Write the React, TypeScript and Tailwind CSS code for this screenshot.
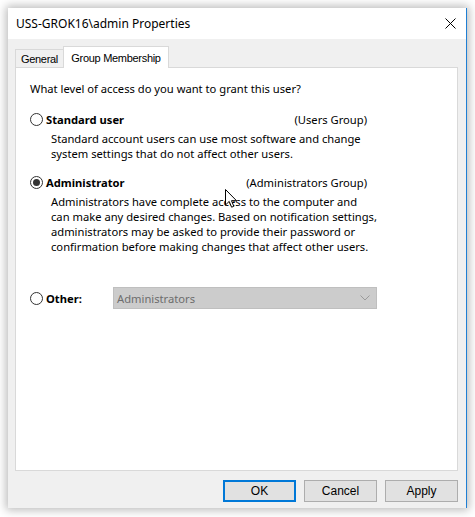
import React from "react";

const ui = "font-['Noto_Sans',sans-serif]";

function Radio({ checked }: { checked?: boolean }) {
  return (
    <span className="w-[13px] h-[13px] rounded-full border border-[#333333] bg-white flex items-center justify-center shrink-0">
      {checked && <span className="w-[7px] h-[7px] rounded-full bg-[#333333]" />}
    </span>
  );
}

function Btn({ label, primary }: { label: string; primary?: boolean }) {
  return (
    <button
      className={
        primary
          ? "w-[73px] h-[22px] bg-[#e1e1e1] border-2 border-[#0078d7] flex items-center justify-center font-['Liberation_Sans',sans-serif] text-[12px] text-black"
          : "w-[73px] h-[22px] bg-[#e1e1e1] border border-[#adadad] flex items-center justify-center font-['Liberation_Sans',sans-serif] text-[12px] text-black"
      }
    >
      {label}
    </button>
  );
}

export default function App() {
  return (
    <div className={`relative w-[475px] h-[517px] bg-white p-2 ${ui} text-[11.2px] text-black`}>
      <div className="w-[459px] h-[500px] flex flex-col border-r border-[#1f7fd4] shadow-[0_0_9px_2px_rgba(0,0,0,0.28)]">
        {/* title bar */}
        <div className="h-[31px] bg-white flex items-center justify-between pl-2 pr-[10px]">
          <span className="text-[12px]">USS-GROK16\admin Properties</span>
          <svg width="11" height="11" viewBox="0 0 11 11">
            <path d="M0.5 0.5 L10.5 10.5 M10.5 0.5 L0.5 10.5" stroke="#000" strokeWidth="1" fill="none" />
          </svg>
        </div>

        {/* body */}
        <div className="flex-1 bg-[#f0f0f0] flex flex-col pl-[7px] pr-[8px] pt-[7px] pb-[6px]">
          {/* tabs */}
          <div className="flex items-end h-[21px] font-['Liberation_Sans',sans-serif] text-[11px] tracking-[-0.3px]">
            <div className="w-[49px] h-[18px] border border-b-0 border-[#d9d9d9] bg-[#f0f0f0] flex items-center justify-center pt-[1px]">
              General
            </div>
            <div className="relative z-10 -ml-px -mb-px w-[106px] h-[22px] border border-b-0 border-[#d9d9d9] bg-white flex items-start justify-center pt-[3px]">
              Group Membership
            </div>
          </div>

          {/* panel */}
          <div className="h-[404px] bg-white border border-[#d9d9d9] pl-[14px] pt-[13px] leading-[15px]">
            <div>What level of access do you want to grant this user?</div>

            <div className="mt-[16px] w-[337px] flex items-center justify-between">
              <div className="flex items-center gap-[3px]">
                <Radio />
                <span className="font-bold">Standard user</span>
              </div>
              <span>(Users Group)</span>
            </div>
            <div className="mt-[4px] ml-[21px]">
              Standard account users can use most software and change
              <br />
              system settings that do not affect other users.
            </div>

            <div className="mt-[14px] w-[337px] flex items-center justify-between">
              <div className="flex items-center gap-[3px]">
                <Radio checked />
                <span className="font-bold">Administrator</span>
              </div>
              <span>(Administrators Group)</span>
            </div>
            <div className="mt-[4px] ml-[21px]">
              Administrators have complete access to the computer and
              <br />
              can make any desired changes. Based on notification settings,
              <br />
              administrators may be asked to provide their password or
              <br />
              confirmation before making changes that affect other users.
            </div>

            <div className="mt-[33px] flex items-center">
              <div className="w-[83px] flex items-center gap-[3px]">
                <Radio />
                <span className="font-bold">Other:</span>
              </div>
              <div className="w-[264px] h-[22px] bg-[#cccccc] border border-[#bfbfbf] flex items-center justify-between pl-[3px] pr-[6px] text-[#6d6d6d]">
                <span>Administrators</span>
                <svg width="10" height="6" viewBox="0 0 10 6">
                  <path d="M0.5 0.5 L5 5 L9.5 0.5" stroke="#9a9a9a" strokeWidth="1" fill="none" />
                </svg>
              </div>
            </div>
          </div>

          {/* buttons */}
          <div className="mt-[9px] flex justify-end gap-[8px]">
            <Btn label="OK" primary />
            <Btn label="Cancel" />
            <Btn label="Apply" />
          </div>
        </div>
      </div>

      {/* mouse pointer */}
      <svg className="absolute left-[225px] top-[189px]" width="13" height="20" viewBox="0 0 13 20">
        <path d="M0.5 0.5 L0.5 16 L4.2 12.4 L6.6 18.2 L8.8 17.3 L6.5 11.7 L11.5 11.7 Z" fill="#fff" stroke="#000" strokeWidth="1" strokeLinejoin="miter" />
      </svg>
    </div>
  );
}
